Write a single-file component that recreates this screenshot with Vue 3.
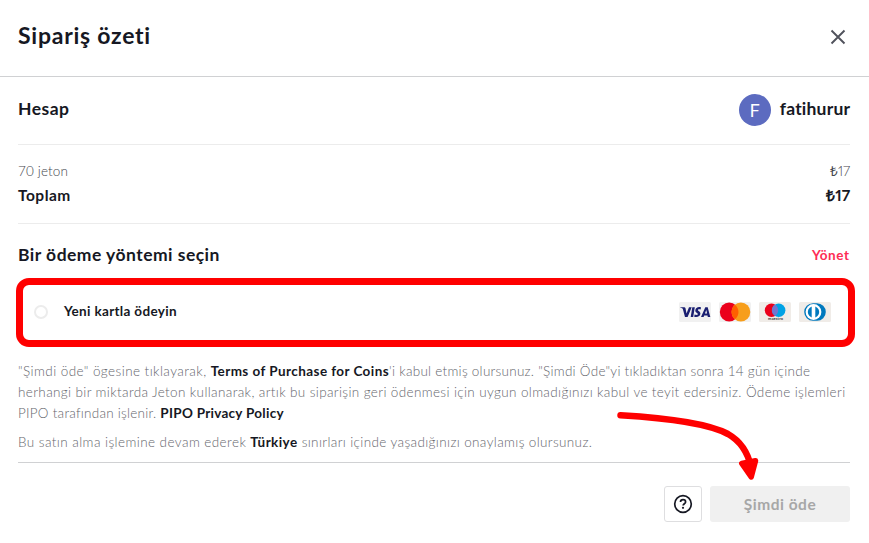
<script setup>
const termsLines = [
  [{ t: '"Şimdi öde" ögesine tıklayarak, ', c: 'intro' }, { t: 'Terms of Purchase for Coins', c: 'strong' }, { t: '\'i kabul etmiş olursunuz. "Şimdi Öde"yi tıkladıktan sonra 14 gün içinde', c: 'accept' }],
  [{ t: 'herhangi bir miktarda Jeton kullanarak, artık bu siparişin geri ödenmesi için uygun olmadığınızı kabul ve teyit edersiniz. Ödeme işlemleri', c: 'refund' }],
  [{ t: 'PIPO tarafından işlenir. ', c: 'processor' }, { t: 'PIPO Privacy Policy', c: 'strong policy' }],
]
const regionLine = [{ t: 'Bu satın alma işlemine devam ederek ', c: 'intro' }, { t: 'Türkiye', c: 'strong' }, { t: ' sınırları içinde yaşadığınızı onaylamış olursunuz.', c: 'refund' }]
</script>

<template>
  <main class="dialog">
    <header class="head">
      <h1>Sipariş özeti</h1>
      <svg class="close" viewBox="0 0 16 16"><path d="M1.500 1.500 14.500 14.500M14.500 1.500 1.500 14.500" /></svg>
    </header>

    <section class="account">
      <h2>Hesap</h2>
      <div class="user"><span class="avatar">F</span><span class="name">fatihurur</span></div>
    </section>

    <section class="summary">
      <div class="row light"><span>70 jeton</span><span class="price"><span class="lira">₺</span>17</span></div>
      <div class="row total"><span>Toplam</span><span class="price"><span class="lira">₺</span>17</span></div>
    </section>

    <div class="method-head">
      <h2>Bir ödeme yöntemi seçin</h2>
      <a class="manage">Yönet</a>
    </div>

    <div class="method">
      <span class="radio"></span>
      <span class="method-name">Yeni kartla ödeyin</span>
      <div class="cards">
        <svg viewBox="0 0 32 20">
          <rect width="32" height="20" rx="1.500" fill="#f1f1f1" />
          <g fill="#1a1f71">
            <path d="M1 5.200h4.200c.7 0 1.100.3 1.300 1L7.500 11.400 10 5.200h2.700L8.600 15H6L3.900 7.200C3.700 6.500 2.600 6 1 5.600z" />
            <path d="M13.300 5.200h2.500L14.200 15h-2.500z" />
            <path d="M22 5.400 21.600 7.500C20.400 7 18.900 7 18.900 7.900c0 1 2.500 1.200 2.500 3.600 0 2.600-3 4.200-6.200 3.200l.4-2.200c1.400.7 3.200.6 3.200-.4 0-1.100-2.500-1.100-2.500-3.500 0-2.700 2.900-4.200 5.700-3.200z" />
            <path fill-rule="evenodd" d="M26.300 5.200h2.400L31.300 15h-2.500l-.3-1.500h-3.300L24.600 15H22zM27.300 8.100l-1.400 3.500h2.200z" />
          </g>
        </svg>
        <svg viewBox="0 0 32 20">
          <rect width="32" height="20" rx="1.500" fill="#f1f1f1" />
          <circle cx="10.200" cy="10" r="9.400" fill="#eb001b" />
          <circle cx="21.900" cy="10" r="9.400" fill="#f79e1b" />
          <path d="M16 2.700a9.400 9.400 0 0 1 0 14.600 9.400 9.400 0 0 1 0-14.600z" fill="#ff5f00" />
        </svg>
        <svg viewBox="0 0 32 20">
          <rect width="32" height="20" rx="1.500" fill="#f0ece8" />
          <circle cx="12.500" cy="8.300" r="6.700" fill="#eb001b" />
          <circle cx="19.700" cy="8.300" r="6.700" fill="#00a2e5" />
          <path d="M16 2.600a6.700 6.700 0 0 1 0 11.400 6.700 6.700 0 0 1 0-11.400z" fill="#7375cf" />
          <text x="9" y="18.200" font-size="4" font-weight="700" textLength="15" fill="#333">maestro</text>
        </svg>
        <svg viewBox="0 0 32 20">
          <rect width="32" height="20" rx="1.500" fill="#f0ece8" />
          <path d="M14 1.200h4a8.800 8.800 0 0 1 0 17.600h-4a8.800 8.800 0 0 1 0-17.600z" fill="#0079be" />
          <circle cx="14.500" cy="10" r="7.900" fill="#fff" />
          <circle cx="14.500" cy="10" r="5.700" fill="#0079be" />
          <path d="M12.700 4h3.600v12h-3.600z" fill="#fff" />
        </svg>
      </div>
    </div>

    <section class="terms">
      <p v-for="(line, i) in termsLines" :key="i"><span v-for="(s, j) in line" :key="j" :class="s.c">{{ s.t }}</span></p>
      <p class="region"><span v-for="(s, j) in regionLine" :key="j" :class="s.c">{{ s.t }}</span></p>
    </section>

    <footer class="actions">
      <button class="help" aria-label="?">
        <svg viewBox="0 0 20 20"><circle cx="10" cy="10" r="8.300" /><path d="M7.500 8.100C7.500 6.600 8.500 5.700 10 5.700s2.600.9 2.600 2.200c0 1.700-2.500 1.900-2.500 3.600" /><circle class="dot" cx="10" cy="13.800" r="1.100" /></svg>
      </button>
      <button class="pay">Şimdi öde</button>
    </footer>

    <svg class="arrow" viewBox="0 0 150 80">
      <path class="shaft" d="M10.500 10.300C57 13 97 18 118 29C132 37 138 48 141 62" />
      <path class="tip" d="M131.800 58.500 145.500 55.700 141.200 72z" />
    </svg>
  </main>
</template>

<style>
body { margin: 0; background: #fff; }
</style>

<style scoped>
* { box-sizing: border-box; }
.dialog { width: 869px; height: 543px; position: relative; overflow: hidden; background: #fff; color: #161823; font-family: Lato, "Open Sans", sans-serif; font-weight: 700; font-variant-ligatures: none; }
h1, h2, p { margin: 0; }
.head { height: 77px; padding: 0 23px 4px 18px; border-bottom: 1px solid #d0d1d3; display: flex; align-items: center; justify-content: space-between; }
h1 { font-size: 23px; line-height: 30px; letter-spacing: .75px; font-weight: 700; padding-bottom: 3px; }
.close { width: 16px; height: 16px; margin-top: 2px; fill: none; stroke: #50525c; stroke-width: 1.9; }
.account { height: 68px; margin: 0 19px 0 18px; padding-bottom: 2px; border-bottom: 1px solid #ececec; display: flex; align-items: center; justify-content: space-between; }
h2 { font-size: 17.5px; line-height: 24px; letter-spacing: .47px; font-weight: 700; padding-bottom: 2px; }
.user { display: flex; align-items: center; gap: 9px; font-size: 17.5px; }
.name { letter-spacing: .2px; margin-right: -.2px; padding-bottom: 2px; }
.avatar { width: 32px; height: 32px; border-radius: 50%; background: #5c6bc0; color: #fff; font: 400 18px/33px Roboto, sans-serif; text-align: center; }
.summary { height: 79px; margin: 0 19px 0 18px; padding-top: 14px; border-bottom: 1px solid #ececec; }
.row { display: flex; justify-content: space-between; height: 24px; line-height: 24px; }
.light { font-size: 13.5px; font-weight: 300; color: #45464e; letter-spacing: .15px; }
.total { font-size: 15.5px; letter-spacing: .5px; }
.price { font-feature-settings: "pnum"; letter-spacing: 0; }
.lira { font-family: "Open Sans", sans-serif; }
.method-head { height: 54px; padding: 9px 20px 0 18px; display: flex; align-items: center; justify-content: space-between; }
.manage { color: #fe2c55; font-size: 13.5px; letter-spacing: .55px; margin-right: -.5px; padding-bottom: 2px; }
.method { width: 839px; height: 69px; margin: 0 0 0 16px; border: 7px solid #f00; border-radius: 13px; padding: 0 17px 2px 11px; display: flex; align-items: center; }
.radio { width: 14px; height: 14px; border: 2px solid #ececec; border-radius: 50%; }
.method-name { margin-left: 16px; padding-bottom: 1px; font-size: 13.5px; letter-spacing: .33px; }
.cards { margin-left: auto; display: flex; gap: 8px; }
.cards svg { width: 32px; height: 20px; display: block; }
.terms { height: 116px; margin: 0 19px 0 18px; padding-top: 14px; border-bottom: 1px solid #d0d1d3; font-size: 13.5px; font-weight: 300; line-height: 21px; color: #65666d; white-space: pre; }
.region { margin-top: 8px; }
.intro { letter-spacing: .43px; }
.accept { letter-spacing: .27px; }
.refund { letter-spacing: .37px; }
.processor { letter-spacing: .25px; }
.strong { font-weight: 700; color: #161823; letter-spacing: .43px; }
.policy { letter-spacing: .28px; }
.actions { height: 60px; padding: 23px 19px 0 0; display: flex; justify-content: flex-end; gap: 8px; }
button { height: 36px; padding: 0; border: 0; border-radius: 3px; font-family: inherit; }
.help { width: 38px; background: #fff; border: 1px solid #dedee0; display: flex; align-items: center; justify-content: center; }
.help svg { width: 20px; height: 20px; fill: none; stroke: #161823; stroke-width: 1.7; }
.help .dot { fill: #161823; stroke: none; }
.pay { width: 140px; padding-bottom: 1px; background: #f0f0f0; color: #a7a7a7; font-size: 15.5px; letter-spacing: .5px; font-weight: 700; }
.arrow { position: absolute; left: 610px; top: 405px; width: 150px; height: 80px; fill: none; stroke: #f00; stroke-linecap: round; stroke-linejoin: round; }
.shaft { stroke-width: 6.5; }
.tip { fill: #f00; stroke-width: 5.5; }
</style>
